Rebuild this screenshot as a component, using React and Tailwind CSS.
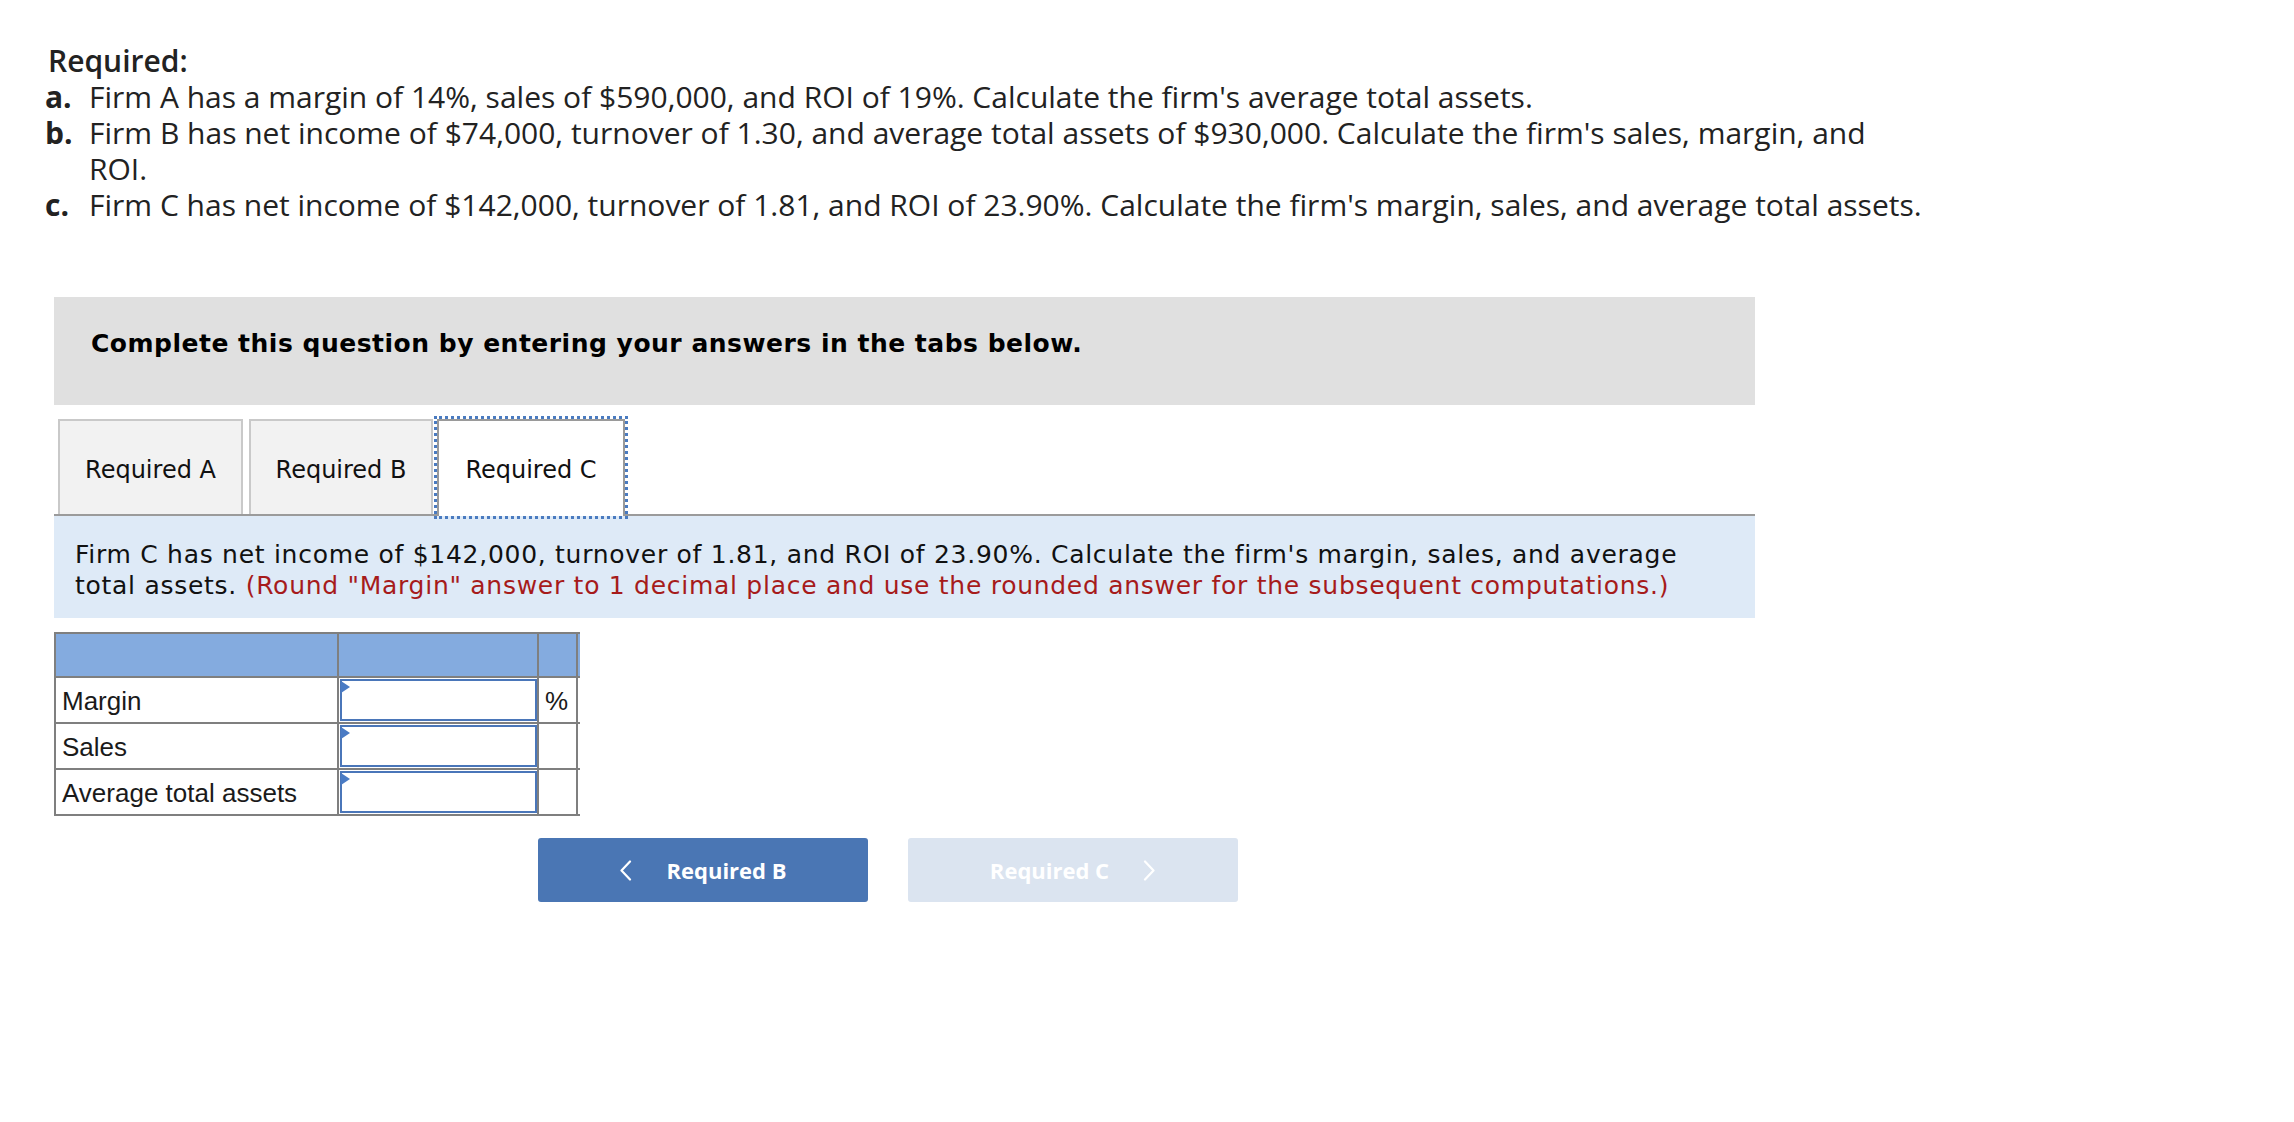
import { useState } from 'react';

const items = [
  {
    label: 'a.',
    text: "Firm A has a margin of 14%, sales of $590,000, and ROI of 19%. Calculate the firm's average total assets."
  },
  {
    label: 'b.',
    text: "Firm B has net income of $74,000, turnover of 1.30, and average total assets of $930,000. Calculate the firm's sales, margin, and",
    rest: 'ROI.'
  },
  {
    label: 'c.',
    text: "Firm C has net income of $142,000, turnover of 1.81, and ROI of 23.90%. Calculate the firm's margin, sales, and average total assets."
  }
];

const tabs = ['Required A', 'Required B', 'Required C'];

const rows = [
  { label: 'Margin', unit: '%' },
  { label: 'Sales', unit: '' },
  { label: 'Average total assets', unit: '' }
];

const Chevron = ({ dir }) => (
  <svg width="13" height="21" viewBox="0 0 13 21" fill="none" stroke="currentColor" strokeWidth="2.2" strokeLinecap="round" strokeLinejoin="round">
    {dir === 'left' ? <path d="M11 1.5 L2.5 10.5 L11 19.5" /> : <path d="M2 1.5 L10.5 10.5 L2 19.5" />}
  </svg>
);

const Tab = ({ label, active, width }) => (
  <div
    className={
      active
        ? 'relative z-10 -mb-[2px] flex h-[97px] items-center justify-center border-2 border-b-0 border-[#9a9a9a] bg-white pb-[2px] pt-[4px] outline-[3px] outline-dotted outline-[#4a7bc0]'
        : 'flex h-[95px] items-center justify-center border-2 border-b-0 border-[#c9c9c9] bg-[#f2f2f2] pt-[4px]'
    }
    style={{ width }}
  >
    <span className="text-[24px] text-[#111]">{label}</span>
  </div>
);

const AnswerRow = ({ row, values, setValues, index }) => (
  <div className="flex h-[46px] border-b-2 border-[#7f7f7f]">
    <div className="flex w-[283px] items-center border-r-2 border-[#7f7f7f] pl-[6px] pt-[2px] text-[26px] text-[#1a1a1a]">
      {row.label}
    </div>
    <div className="relative w-[200px] border-r-2 border-[#7f7f7f] p-[1px] pr-0">
      <input
        value={values[index]}
        onChange={(e) => setValues(values.map((v, i) => (i === index ? e.target.value : v)))}
        className="block h-full w-full border-2 border-[#4a76b9] bg-white px-2 text-[24px] outline-none"
      />
      <span className="absolute left-[2px] top-[3px] h-0 w-0 border-y-[6px] border-l-[9px] border-y-transparent border-l-[#4a7bc4]" />
    </div>
    <div className="flex w-[39px] items-center border-r-2 border-[#7f7f7f] pl-[6px] pt-[2px] text-[26px] text-[#1a1a1a]">
      {row.unit}
    </div>
  </div>
);

export default function App() {
  const [values, setValues] = useState(['', '', '']);

  return (
    <div className="min-h-screen bg-white pt-[43px]">
      <div className="ml-[45px] font-['Open_Sans',sans-serif] text-[30px] leading-[36px] text-[#222]">
        <div className="pl-[3px] font-semibold">Required:</div>
        {items.map((item) => (
          <div key={item.label} className="flex">
            <span className="w-[44px] shrink-0 font-bold">{item.label}</span>
            <span>
              {item.text}
              {item.rest && (
                <>
                  <br />
                  {item.rest}
                </>
              )}
            </span>
          </div>
        ))}
      </div>

      <div className="ml-[54px] mt-[74px] w-[1701px] font-['DejaVu_Sans',Verdana,sans-serif]">
        <div className="h-[108px] bg-[#e0e0e0] pl-[37px] pt-[32px] text-[25px] font-bold leading-[30px] tracking-[0.5px] text-black">
          Complete this question by entering your answers in the tabs below.
        </div>

        <div className="mt-[14px] flex items-end pl-[4px]">
          <Tab label={tabs[0]} width={185} />
          <div className="w-[6px]" />
          <Tab label={tabs[1]} width={184} />
          <div className="w-[4px]" />
          <Tab label={tabs[2]} width={188} active />
        </div>

        <div className="border-t-2 border-[#9b9b9b] bg-[#deeaf7] pb-[17px] pl-[21px] pr-[21px] pt-[23px] text-[25px] leading-[31px] tracking-[0.72px] text-[#111]">
          Firm C has net income of $142,000, turnover of 1.81, and ROI of 23.90%. Calculate the firm's margin, sales, and average
          <br />
          total assets.{' '}
          <span className="text-[#a61b1b]">
            (Round "Margin" answer to 1 decimal place and use the rounded answer for the subsequent computations.)
          </span>
        </div>

        <div className="mt-[14px] w-[526px] border-l-2 border-t-2 border-[#7f7f7f] font-['Liberation_Sans',Arial,sans-serif]">
          <div className="flex h-[44px] border-b-2 border-[#7f7f7f] bg-[#84abdf]">
            <div className="w-[283px] border-r-2 border-[#7f7f7f]" />
            <div className="w-[200px] border-r-2 border-[#7f7f7f]" />
            <div className="w-[39px] border-r-2 border-[#7f7f7f]" />
          </div>
          {rows.map((row, i) => (
            <AnswerRow key={row.label} row={row} index={i} values={values} setValues={setValues} />
          ))}
        </div>

        <div className="ml-[484px] mt-[22px] flex gap-[40px] font-['Open_Sans',sans-serif] text-[22px] font-bold">
          <button className="flex h-[64px] w-[330px] items-center justify-center gap-[34px] rounded-[3px] bg-[#4a76b4] text-white">
            <Chevron dir="left" />
            <span>Required B</span>
          </button>
          <button className="flex h-[64px] w-[330px] items-center justify-center gap-[34px] rounded-[3px] bg-[#dbe4f0] text-white">
            <span>Required C</span>
            <Chevron dir="right" />
          </button>
        </div>
      </div>
    </div>
  );
}
